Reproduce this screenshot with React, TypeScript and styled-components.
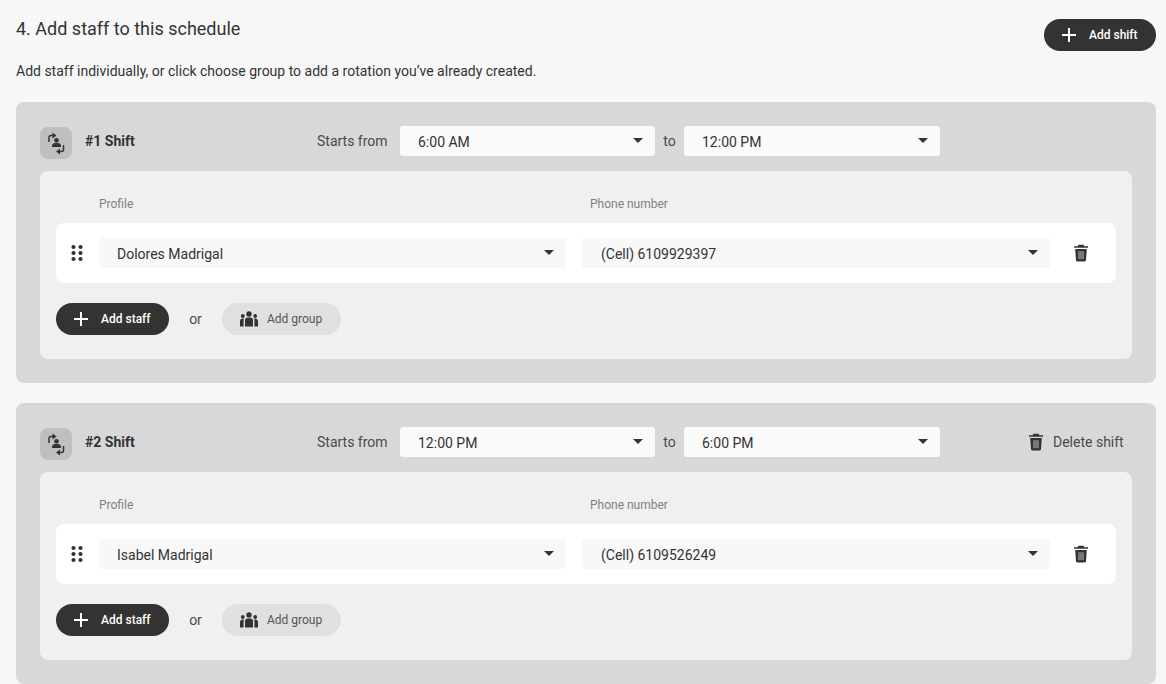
import React from 'react';
import styled, { createGlobalStyle } from 'styled-components';

const Global = createGlobalStyle`
  html, body { margin: 0; padding: 0; background: #f7f7f7; overflow: hidden; }
  body { font-family: Roboto, "Liberation Sans", sans-serif; color: #333; }
  * { box-sizing: border-box; }
`;

const Page = styled.div`
  width: 1166px;
  height: 684px;
  overflow: hidden;
  padding: 19px 10px 0 16px;
`;
const TopRow = styled.div`
  display: flex;
  justify-content: space-between;
  align-items: flex-start;
  height: 32px;
`;
const Heading = styled.h2`
  margin: -1px 0 0;
  font-size: 18px;
  line-height: 21px;
  font-weight: 400;
  color: #333;
`;
const Intro = styled.p`
  margin: 12px 0 23px;
  font-size: 14px;
  line-height: 16px;
  color: #333;
`;
const Card = styled.section`
  background: #d8d8d8;
  border-radius: 8px;
  padding: 24px 24px 24px;
  margin-bottom: 20px;
`;
const ShiftHeader = styled.div`
  display: flex;
  align-items: flex-start;
  height: 33px;
  margin-bottom: 12px;
`;
const IconTile = styled.div`
  width: 32px;
  height: 32px;
  margin-top: 1px;
  border-radius: 8px;
  background: #bfbfbf;
  display: flex;
  align-items: center;
  justify-content: center;
`;
const ShiftTitle = styled.div`
  width: 232px;
  margin-left: 13px;
  font-size: 14px;
  line-height: 30px;
  font-weight: 700;
  color: #333;
`;
const TimeLabel = styled.span<{ $w: number; $center?: boolean }>`
  width: ${(p) => p.$w}px;
  font-size: 14px;
  line-height: 30px;
  color: #4a4a4a;
  text-align: ${(p) => (p.$center ? 'center' : 'left')};
`;
const Select = styled.div<{ $w: number; $pad?: number; $bg?: string }>`
  width: ${(p) => p.$w}px;
  height: 30px;
  flex: none;
  background: ${(p) => p.$bg ?? '#fafafa'};
  border-radius: 3px;
  padding: 1px 0 0 ${(p) => p.$pad ?? 18}px;
  display: flex;
  align-items: center;
  justify-content: space-between;
  font-size: 14px;
  color: #333;
`;
const Caret = styled.i`
  width: 0;
  height: 0;
  margin: -3px 12px 0 0;
  border-left: 5px solid transparent;
  border-right: 5px solid transparent;
  border-top: 5px solid #333;
`;
const DeleteShift = styled.button`
  margin-left: 88px;
  height: 30px;
  padding: 0;
  border: 0;
  background: none;
  display: flex;
  align-items: center;
  gap: 9px;
  font: 400 14px Roboto, sans-serif;
  color: #4a4a4a;
  white-space: nowrap;
`;
const Panel = styled.div`
  background: #f0f0f0;
  border-radius: 8px;
  padding: 26px 16px 24px;
`;
const Columns = styled.div`
  display: flex;
  padding-left: 43px;
  height: 26px;
  font-size: 12px;
  line-height: 14px;
  color: #808080;
`;
const ProfileHead = styled.span`
  width: 491px;
`;
const StaffRow = styled.div`
  height: 60px;
  background: #fff;
  border-radius: 8px;
  display: flex;
  align-items: center;
  padding-left: 15px;
  gap: 16px;
`;
const Handle = styled.svg`
  width: 12px;
  height: 18px;
  flex: none;
`;
const TrashButton = styled.div`
  width: 16px;
  margin-left: 7px;
  display: flex;
  justify-content: center;
`;
const Actions = styled.div`
  display: flex;
  align-items: center;
  margin-top: 20px;
`;
const Pill = styled.button<{ $w: number; $light?: boolean }>`
  width: ${(p) => p.$w}px;
  height: 32px;
  border: 0;
  border-radius: 16px;
  padding: 0 0 0 ${(p) => (p.$light ? 18 : 17)}px;
  background: ${(p) => (p.$light ? '#e0e0e0' : '#333')};
  color: ${(p) => (p.$light ? '#555' : '#fff')};
  display: flex;
  align-items: center;
  gap: ${(p) => (p.$light ? 9 : 12)}px;
  font: ${(p) => (p.$light ? 400 : 500)} 12px Roboto, sans-serif;
  flex: none;
`;
const Or = styled.span`
  width: 53px;
  text-align: center;
  font-size: 14px;
  color: #4a4a4a;
`;

const Plus = () => (
  <svg width="16" height="16" viewBox="0 0 16 16" fill="none" stroke="#fff" strokeWidth="2">
    <path d="M8 1v14M1 8h14" />
  </svg>
);
const Trash = () => (
  <svg width="16" height="18" viewBox="0 0 16 18">
    <path fill="#333" d="M5.500 0.800h5l.9 1.400H15v1.600H1V2.200h3.600zM2.200 5h11.600l-.8 11.200c-.1.700-.6 1.200-1.300 1.200H4.300c-.7 0-1.200-.5-1.300-1.200z" />
    <path stroke="#bbb" strokeWidth="1" d="M6 7.200v8M8 7.200v8M10 7.200v8" />
  </svg>
);
const Group = () => (
  <svg width="18" height="16" viewBox="0 0 18 16" fill="#333">
    <circle cx="9" cy="3" r="2.700" />
    <circle cx="2.800" cy="5" r="1.900" />
    <circle cx="15.200" cy="5" r="1.900" />
    <path d="M5 15.500V9.300C5 7.600 6.200 6.600 7.600 6.600h2.800c1.400 0 2.600 1 2.600 2.700v6.200z" />
    <path d="M0 15.500v-5c0-2 1-3 2.600-3 .6 0 1 .1 1.400.3-.3.500-.4 1-.4 1.600v6.100zM18 15.500v-5c0-2-1-3-2.600-3-.6 0-1 .1-1.400.3.300.5.400 1 .4 1.600v6.100z" />
  </svg>
);
const Rotate = () => (
  <svg width="32" height="32" viewBox="0 0 32 32" fill="none">
    <circle cx="16.500" cy="13.300" r="2.300" fill="#333" />
    <path fill="#333" d="M12 20v-1.200c0-2 2-3 4.500-3s4.500 1 4.500 3V20z" />
    <path stroke="#333" strokeWidth="1.500" d="M9 15v-4.500c0-1.300.7-2 2-2h2" />
    <path fill="#333" d="M12.500 5.500l4 3-4 3z" />
    <path stroke="#333" strokeWidth="1.500" d="M23.500 18v4.500c0 1.300-.7 2-2 2h-2" />
    <path fill="#333" d="M20 21.500l-4 3 4 3z" />
  </svg>
);
const Dots = () => (
  <Handle viewBox="0 0 12 18" fill="#333">
    {[3, 9, 15].flatMap((y) => [2.500, 9.500].map((x) => <circle key={`${x}-${y}`} cx={x} cy={y} r="2.100" />))}
  </Handle>
);

const shifts = [
  { n: 1, from: '6:00 AM', to: '12:00 PM', name: 'Dolores Madrigal', phone: '(Cell) 6109929397', del: false },
  { n: 2, from: '12:00 PM', to: '6:00 PM', name: 'Isabel Madrigal', phone: '(Cell) 6109526249', del: true },
];

export default function App() {
  return (
    <Page>
      <Global />
      <TopRow>
        <Heading>4. Add staff to this schedule</Heading>
        <Pill $w={112}><Plus />Add shift</Pill>
      </TopRow>
      <Intro>Add staff individually, or click choose group to add a rotation you’ve already created.</Intro>
      {shifts.map((s) => (
        <Card key={s.n}>
          <ShiftHeader>
            <IconTile><Rotate /></IconTile>
            <ShiftTitle>#{s.n} Shift</ShiftTitle>
            <TimeLabel $w={83}>Starts from</TimeLabel>
            <Select $w={255}>{s.from}<Caret /></Select>
            <TimeLabel $w={29} $center>to</TimeLabel>
            <Select $w={256}>{s.to}<Caret /></Select>
            {s.del && <DeleteShift><Trash />Delete shift</DeleteShift>}
          </ShiftHeader>
          <Panel>
            <Columns>
              <ProfileHead>Profile</ProfileHead>
              <span>Phone number</span>
            </Columns>
            <StaffRow>
              <Dots />
              <Select $w={467} $bg="#f8f8f8">{s.name}<Caret /></Select>
              <Select $w={468} $pad={19} $bg="#f8f8f8">{s.phone}<Caret /></Select>
              <TrashButton><Trash /></TrashButton>
            </StaffRow>
            <Actions>
              <Pill $w={113}><Plus />Add staff</Pill>
              <Or>or</Or>
              <Pill $w={119} $light><Group />Add group</Pill>
            </Actions>
          </Panel>
        </Card>
      ))}
    </Page>
  );
}
